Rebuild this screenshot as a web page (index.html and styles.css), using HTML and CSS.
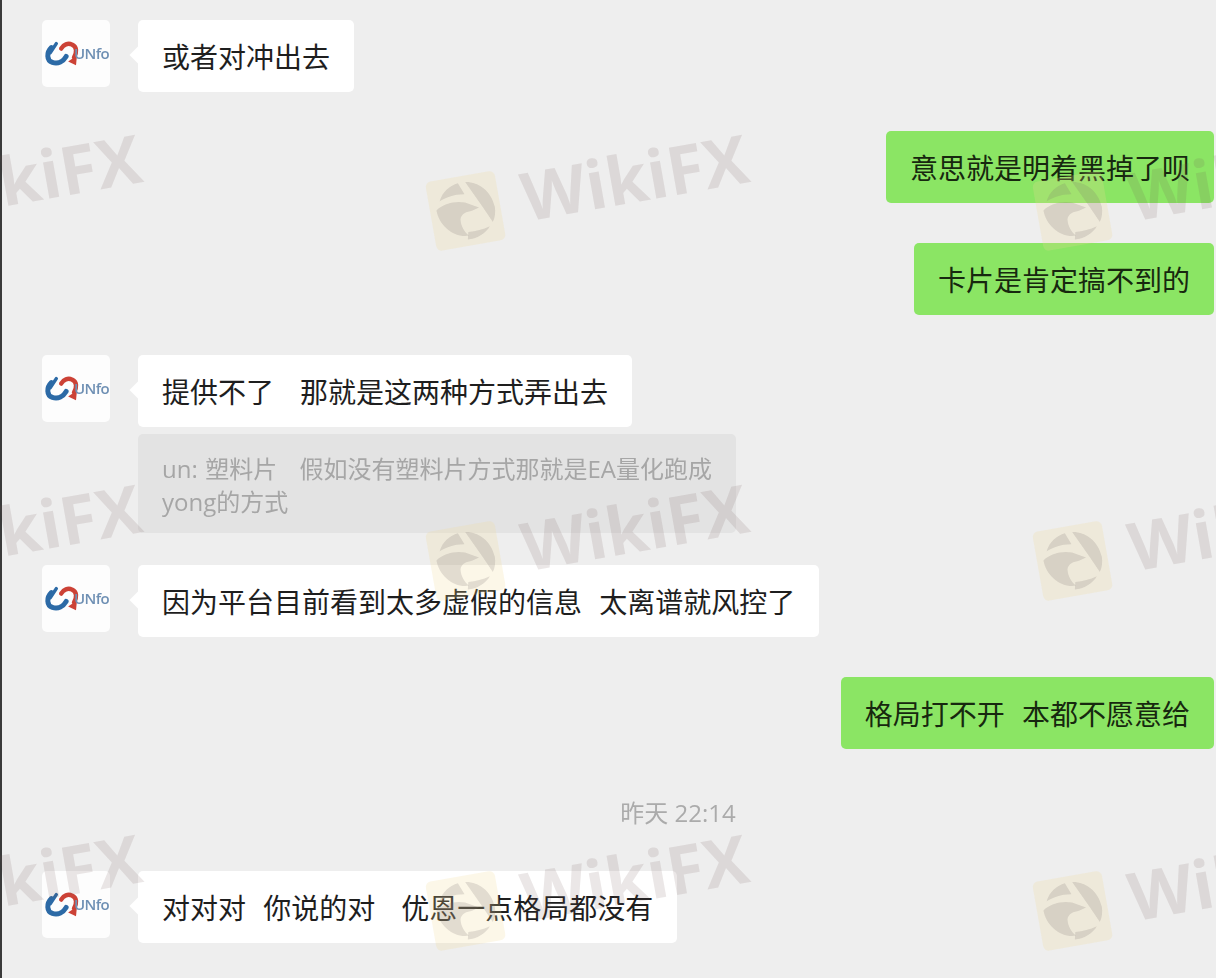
FILE: index.html
```html
<!DOCTYPE html>
<html lang="zh-CN">

<head>
  <meta charset="UTF-8" />
  <meta name="viewport" content="width=device-width, initial-scale=1.0" />
  <title>聊天记录</title>
  <link rel="stylesheet" href="styles.css">
</head>

<body>
  <svg class="defs" width="0" height="0" aria-hidden="true">
    <symbol id="logo" viewBox="0 0 68 68">
      <path d="M9 28c-5 5-5 13 1 15 6 2 11-1 14-6" fill="none" stroke="#2c6aa6" stroke-width="5" stroke-linecap="round" />
      <path d="M14 24l-6 9" fill="none" stroke="#2c6aa6" stroke-width="3.5" stroke-linecap="round" />
      <path d="M19 29c2-4 7-6 11-4 5 2 5 8 2 13" fill="none" stroke="#cc4236" stroke-width="4.5" stroke-linecap="round" />
      <path d="M26 42l9-6-1 10z" fill="#cc4236" />
    </symbol>
    <symbol id="mark" viewBox="0 0 78 78">
      <rect x="1" y="1" width="76" height="76" rx="6" fill="#f2dc96" fill-opacity=".22" />
      <g fill="#7a7070" fill-opacity=".2">
        <path d="M13 24c5-10 14-15 23-16l5 13c-11-2-21 0-28 3z" />
        <path d="M44 8c14 2 26 14 27 32 0 6-2 12-5 16l-8-18z" />
        <path d="M62 60c-6 7-16 11-26 10l2-8c8 1 16 0 24-2z" />
        <path d="M8 33c8-6 22-7 32-3l14 8-8 2c-6 0-12 1-14 7-1 7 2 15 6 19C22 66 8 50 8 33z" />
      </g>
    </symbol>
  </svg>

  <div class="chat">
    <div class="row row-first">
      <div class="avatar">
        <svg class="logo"><use href="#logo" /></svg>
        <span class="logo-name">UNfo</span>
      </div>
      <div class="bubble">或者对冲出去</div>
    </div>

    <div class="row row-me">
      <div class="bubble bubble-me">意思就是明着黑掉了呗</div>
    </div>

    <div class="row row-me">
      <div class="bubble bubble-me">卡片是肯定搞不到的</div>
    </div>

    <div class="row row-before-quote">
      <div class="avatar">
        <svg class="logo"><use href="#logo" /></svg>
        <span class="logo-name">UNfo</span>
      </div>
      <div class="bubble">提供不了   那就是这两种方式弄出去</div>
    </div>

    <div class="quote">un: 塑料片   假如没有塑料片方式那就是EA量化跑成<br>yong的方式</div>

    <div class="row row-after-quote">
      <div class="avatar">
        <svg class="logo"><use href="#logo" /></svg>
        <span class="logo-name">UNfo</span>
      </div>
      <div class="bubble">因为平台目前看到太多虚假的信息  太离谱就风控了</div>
    </div>

    <div class="row row-me">
      <div class="bubble bubble-me">格局打不开  本都不愿意给</div>
    </div>

    <div class="time">昨天 22:14</div>

    <div class="row row-after-time">
      <div class="avatar">
        <svg class="logo"><use href="#logo" /></svg>
        <span class="logo-name">UNfo</span>
      </div>
      <div class="bubble">对对对  你说的对   优恩一点格局都没有</div>
    </div>
  </div>

  <!-- watermark sits over the whole chat -->
  <div class="watermarks" aria-hidden="true">
    <div class="wm-grid">
      <div class="wm"><svg class="wm-icon"><use href="#mark" /></svg><span class="wm-text">WikiFX</span></div>
      <div class="wm"><svg class="wm-icon"><use href="#mark" /></svg><span class="wm-text">WikiFX</span></div>
      <div class="wm"><svg class="wm-icon"><use href="#mark" /></svg><span class="wm-text">WikiFX</span></div>
      <div class="wm"><svg class="wm-icon"><use href="#mark" /></svg><span class="wm-text">WikiFX</span></div>
      <div class="wm"><svg class="wm-icon"><use href="#mark" /></svg><span class="wm-text">WikiFX</span></div>
      <div class="wm"><svg class="wm-icon"><use href="#mark" /></svg><span class="wm-text">WikiFX</span></div>
      <div class="wm"><svg class="wm-icon"><use href="#mark" /></svg><span class="wm-text">WikiFX</span></div>
      <div class="wm"><svg class="wm-icon"><use href="#mark" /></svg><span class="wm-text">WikiFX</span></div>
      <div class="wm"><svg class="wm-icon"><use href="#mark" /></svg><span class="wm-text">WikiFX</span></div>
    </div>
  </div>
</body>

</html>
```

FILE: styles.css
```css
html,
body {
  margin: 0;
  padding: 0;
  height: 100%;
  overflow: hidden;
}

body {
  position: relative;
  width: 1216px;
  height: 978px;
  background: #eeeeee;
  font-family: "Open Sans", "Noto Sans CJK SC", sans-serif;
  color: #1e1e1e;
}

.defs {
  position: absolute;
}

.chat {
  box-sizing: border-box;
  height: 978px;
  padding: 20px 2px 0 40px;
  border-left: 2px solid #3a3a3a;
  filter: blur(0.6px);
}

.row {
  display: flex;
  align-items: flex-start;
  gap: 28px;
  margin-bottom: 40px;
}

.row-first {
  margin-bottom: 39px;
}

.row-me {
  justify-content: flex-end;
}

.row-before-quote {
  margin-bottom: 7px;
}

.row-after-quote {
  margin-top: 32px;
}

.row-after-time {
  margin-bottom: 0;
}

.avatar {
  position: relative;
  flex: none;
  width: 68px;
  height: 67px;
  background: #fdfdfd;
  border-radius: 5px;
}

.logo {
  position: absolute;
  left: 0;
  top: 0;
  width: 68px;
  height: 67px;
}

.logo-name {
  position: absolute;
  left: 32px;
  top: 24px;
  font-size: 15px;
  font-weight: 600;
  line-height: 18px;
  letter-spacing: -0.6px;
  color: #6f90b4;
}

.bubble {
  position: relative;
  height: 32px;
  padding: 21px 24px 19px;
  background: #ffffff;
  border-radius: 5px;
  font-size: 28px;
  line-height: 32px;
  word-spacing: 1.4px;
  white-space: pre;
}

.bubble::before {
  content: "";
  position: absolute;
  left: -6px;
  top: 29px;
  width: 12px;
  height: 12px;
  background: #ffffff;
  transform: rotate(45deg);
}

.bubble-me {
  background: #8be564;
  color: #17280f;
}

.bubble-me::before {
  display: none;
}

.quote {
  box-sizing: border-box;
  width: 598px;
  margin-left: 96px;
  padding: 18px 24px 15px;
  background: #e3e3e3;
  border-radius: 5px;
  color: #a6a6a6;
  font-size: 24px;
  line-height: 33px;
  word-spacing: 1.2px;
  white-space: pre;
}

.time {
  margin: 0 0 44px 100px;
  padding-top: 10px;
  text-align: center;
  color: #ababab;
  font-size: 24px;
  line-height: 28px;
}

.watermarks {
  position: absolute;
  inset: 0;
  overflow: hidden;
  pointer-events: none;
}

.wm-grid {
  display: grid;
  grid-template-columns: repeat(3, 607px);
  grid-auto-rows: 350px;
  width: 1821px;
  margin: 131px 0 0 -179px;
}

.wm {
  display: flex;
  align-items: center;
  gap: 22px;
  width: 324px;
  height: 120px;
  transform: rotate(-10deg);
}

.wm-icon {
  flex: none;
  width: 72px;
  height: 72px;
  margin-bottom: 4px;
}

.wm-text {
  margin-bottom: 14px;
  font-family: "Open Sans", sans-serif;
  font-weight: 700;
  font-size: 67px;
  line-height: 80px;
  color: rgba(110, 85, 85, 0.14);
}
```
